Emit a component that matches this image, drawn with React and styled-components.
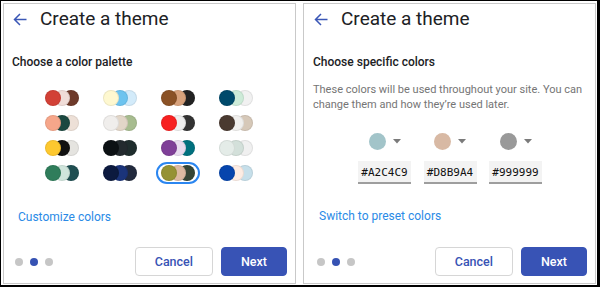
import React from "react";
import styled, { createGlobalStyle } from "styled-components";

const Global = createGlobalStyle`
  html, body { margin: 0; padding: 0; background: #fff; }
  body { font-family: Roboto, "Noto Sans", Arial, sans-serif; }
  * { box-sizing: border-box; }
`;

const Frame = styled.div`
  width: 600px;
  height: 287px;
  border-style: solid;
  border-color: #000;
  border-width: 1px 3px 2px 1px;
  padding: 2px 1px 1px 2px;
  display: flex;
  gap: 7px;
  background: #fff;
`;

const Panel = styled.section`
  width: 293px;
  border: 1px solid #c9c9c9;
  display: flex;
  flex-direction: column;
  padding: 3px 8px 7px ${(p) => p.$pl}px;
`;

const Header = styled.div`
  display: flex;
  align-items: center;
  gap: 13px;
  height: 24px;
  padding-left: 1px;
`;

const Title = styled.h1`
  margin: 0;
  font-family: Roboto, Arial, sans-serif;
  font-weight: 400;
  font-size: 19px;
  line-height: 24px;
  color: #202124;
`;

const Heading = styled.h2`
  margin: 23px 0 0;
  font-weight: 500;
  font-size: 12px;
  line-height: 16px;
  color: #202124;
`;

const PaletteGrid = styled.div`
  margin: 17px 0 0 21px;
  display: grid;
  grid-template-columns: repeat(4, 58px);
  row-gap: 3px;
  justify-items: center;
`;

const Swatch = styled.div`
  display: flex;
  padding: 1px 3px;
  border: 2px solid ${(p) => (p.$selected ? "#2b86f0" : "transparent")};
  border-radius: 11px;
`;

const Dot = styled.span`
  width: 16px;
  height: 16px;
  border-radius: 50%;
  border: 1px solid rgba(0, 0, 0, 0.07);
  background: ${(p) => p.$c};
  z-index: ${(p) => p.$z};
  & + & {
    margin-left: -7px;
  }
`;

const TextLink = styled.button`
  align-self: flex-start;
  margin-top: ${(p) => p.$mt}px;
  padding: 0 6px;
  border: none;
  background: none;
  font-family: Roboto, Arial, sans-serif;
  font-weight: 400;
  font-size: 12px;
  line-height: 16px;
  color: #2a8ae6;
`;

const Footer = styled.div`
  margin-top: auto;
  display: flex;
  align-items: center;
  gap: 8px;
`;

const Steps = styled.div`
  display: flex;
  gap: 7px;
  margin-left: ${(p) => p.$ml}px;
  margin-right: auto;
`;

const Step = styled.span`
  width: 8px;
  height: 8px;
  border-radius: 50%;
  background: ${(p) => (p.$active ? "#3652b3" : "#c6c6c6")};
`;

const Button = styled.button`
  height: 29px;
  padding: 0 19px;
  border-radius: 4px;
  font-family: Roboto, Arial, sans-serif;
  font-weight: 500;
  font-size: 12.5px;
  border: 1px solid ${(p) => (p.$primary ? "#3853b5" : "#d6d6d6")};
  background: ${(p) => (p.$primary ? "#3853b5" : "#fff")};
  color: ${(p) => (p.$primary ? "#fff" : "#3853b5")};
`;

const Para = styled.p`
  margin: 12px 0 0;
  font-size: 11px;
  line-height: 15px;
  color: #757575;
`;

const ColorGrid = styled.div`
  margin-top: 21px;
  display: grid;
  grid-template-columns: repeat(3, 65.5px);
  justify-content: center;
  justify-items: center;
  row-gap: 11px;
`;

const Picker = styled.div`
  display: flex;
  align-items: center;
  gap: 7px;
  height: 17px;
`;

const PickerDot = styled.span`
  width: 17px;
  height: 17px;
  border-radius: 50%;
  background: ${(p) => p.$c};
`;

const HexField = styled.div`
  width: 53px;
  height: 23px;
  display: flex;
  align-items: center;
  justify-content: center;
  background: #f3f3f3;
  border-bottom: 2px solid #9e9e9e;
  font-family: "DejaVu Sans Mono", "Liberation Mono", monospace;
  font-weight: 400;
  font-size: 11px;
  color: #111;
  padding-top: 1px;
`;

const BackArrow = () => (
  <svg width="14" height="13" viewBox="0 0 14 13" fill="none">
    <path
      d="M13.5 6.5H1.5M7 1L1.5 6.5L7 12"
      stroke="#3b57b6"
      strokeWidth="1.5"
      strokeLinecap="butt"
      strokeLinejoin="miter"
    />
  </svg>
);

const Caret = () => (
  <svg width="8" height="5" viewBox="0 0 8 5">
    <polygon points="0,0 8,0 4,4.5" fill="#7a7a7a" />
  </svg>
);

const palettes = [
  ["#d24136", "#f0ddd8", "#6e3a2a"],
  ["#fef8d0", "#6cc3ef", "#d3ebfa"],
  ["#8b5226", "#d8a27c", "#222222"],
  ["#004a6b", "#cdebd8", "#f1f1f1"],
  ["#f6a68a", "#1b4840", "#ede0d7"],
  ["#f0eeec", "#e2d6c8", "#a7bc8f"],
  ["#f72020", "#eeeeee", "#333333"],
  ["#4a3a30", "#f0efed", "#d6c8b8"],
  ["#fdc82f", "#111111", "#e5e4e0"],
  ["#0c1114", "#232a2e", "#1f2d2d"],
  ["#7f3f98", "#e8dcef", "#00707e"],
  ["#e4ece8", "#d3e0da", "#f0f0f0"],
  ["#2f7d5b", "#d0e5dc", "#1f4f52"],
  ["#0c1a3f", "#1b347a", "#222a3e"],
  ["#959234", "#dcb9a2", "#354536"],
  ["#0645ad", "#fdece3", "#c6dfea"],
];

const custom = ["#A2C4C9", "#D8B9A4", "#999999"];

const PanelFooter = ({ ml }) => (
  <Footer>
    <Steps $ml={ml}>
      <Step />
      <Step $active />
      <Step />
    </Steps>
    <Button>Cancel</Button>
    <Button $primary>Next</Button>
  </Footer>
);

const PanelHeader = () => (
  <Header>
    <BackArrow />
    <Title>Create a theme</Title>
  </Header>
);

export default function App() {
  return (
    <>
      <Global />
      <Frame>
        <Panel $pl={8}>
          <PanelHeader />
          <Heading>Choose a color palette</Heading>
          <PaletteGrid>
            {palettes.map((p, i) => (
              <Swatch key={i} $selected={i === 14}>
                {p.map((c, j) => (
                  <Dot key={j} $c={c} $z={3 - j} />
                ))}
              </Swatch>
            ))}
          </PaletteGrid>
          <TextLink $mt={25}>Customize colors</TextLink>
          <PanelFooter ml={3} />
        </Panel>
        <Panel $pl={9}>
          <PanelHeader />
          <Heading>Choose specific colors</Heading>
          <Para>
            These colors will be used throughout your site. You can change them
            and how they’re used later.
          </Para>
          <ColorGrid>
            {custom.map((c) => (
              <Picker key={c}>
                <PickerDot $c={c} />
                <Caret />
              </Picker>
            ))}
            {custom.map((c) => (
              <HexField key={c + "h"}>{c}</HexField>
            ))}
          </ColorGrid>
          <TextLink $mt={24}>Switch to preset colors</TextLink>
          <PanelFooter ml={4} />
        </Panel>
      </Frame>
    </>
  );
}
